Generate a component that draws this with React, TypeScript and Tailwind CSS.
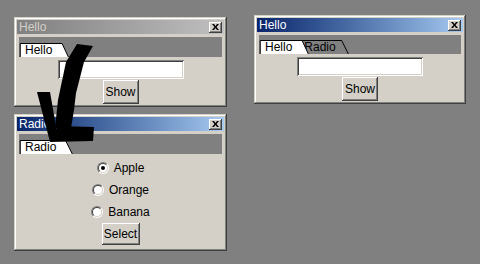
import React from 'react';

const raised =
  'shadow-[inset_-1px_-1px_0_#404040,inset_1px_1px_0_#d4d0c8,inset_-2px_-2px_0_#808080,inset_2px_2px_0_#ffffff]';
const button =
  'shadow-[inset_-1px_-1px_0_#404040,inset_1px_1px_0_#ffffff,inset_-2px_-2px_0_#808080,inset_2px_2px_0_#d4d0c8]';
const sunken =
  'shadow-[inset_1px_1px_0_#808080,inset_-1px_-1px_0_#ffffff,inset_2px_2px_0_#404040,inset_-2px_-2px_0_#d4d0c8]';

const font = "font-['Liberation_Sans',Arial,sans-serif]";

const CloseButton = () => (
  <div className={`flex h-[11px] w-[13px] items-center justify-center bg-[#d4d0c8] ${button}`}>
    <svg width="7" height="6" viewBox="0 0 7 6">
      <path d="M0 0h2l1.5 2L5 0h2L4.5 3 7 6H5L3.5 4 2 6H0l2.5-3z" fill="#000" />
    </svg>
  </div>
);

const TabShape = ({ active }: { active?: boolean }) => (
  <svg className="absolute inset-0 h-full w-full overflow-visible" viewBox="0 0 100 14" preserveAspectRatio="none">
    <path
      d="M0.5 14 V0.5 H87 L100 14"
      fill={active ? '#ffffff' : '#808080'}
      stroke="#000"
      strokeWidth="1"
      vectorEffect="non-scaling-stroke"
    />
  </svg>
);

const Tab = ({ label, active, className = '' }: { label: string; active?: boolean; className?: string }) => (
  <div className={`relative h-[14px] ${className}`}>
    <TabShape active={active} />
    <span className="relative block pl-[5px] pr-[16px] text-[12px] leading-[14px] text-black">{label}</span>
  </div>
);

const Radio = ({ label, checked }: { label: string; checked?: boolean }) => (
  <div className="flex h-[22px] items-center gap-[5px]">
    <div className="h-[12px] w-[12px] rounded-full border border-t-[#808080] border-l-[#808080] border-r-white border-b-white">
      <div className="flex h-full w-full items-center justify-center rounded-full border border-t-[#404040] border-l-[#404040] border-r-[#d4d0c8] border-b-[#d4d0c8] bg-white">
        {checked && <div className="h-[4px] w-[4px] rounded-full bg-black" />}
      </div>
    </div>
    <span className="text-[12px] text-black">{label}</span>
  </div>
);

const Window = ({
  title,
  active,
  className,
  tabs,
  children,
}: {
  title: string;
  active?: boolean;
  className: string;
  tabs: React.ReactNode;
  children: React.ReactNode;
}) => (
  <div className={`absolute flex flex-col bg-[#d4d0c8] p-[3px] ${raised} ${className}`}>
    <div
      className={`flex h-[14px] items-center justify-between pl-[2px] pr-[2px] ${
        active
          ? 'bg-linear-to-r from-[#0a246a] to-[#a6caf0] text-white'
          : 'bg-linear-to-r from-[#808080] to-[#c0c0c0] text-[#d4d0c8]'
      }`}
    >
      <span className="text-[12px] leading-[14px]">{title}</span>
      <CloseButton />
    </div>
    <div className="mx-[2px] mt-[3px] flex h-[20px] items-end bg-[#808080] pl-[1px]">{tabs}</div>
    <div className="flex flex-1 flex-col items-center">{children}</div>
  </div>
);

const HelloBody = () => (
  <>
    <div className={`mt-[3px] h-[19px] w-[126px] bg-white ${sunken}`} />
    <div className={`mt-[1px] flex h-[24px] w-[36px] items-center justify-center bg-[#d4d0c8] text-[12px] text-black ${button}`}>
      Show
    </div>
  </>
);

export default function App() {
  return (
    <div className={`relative h-[264px] w-[480px] overflow-hidden bg-[#808080] ${font}`}>
      <Window title="Hello" className="left-[14px] top-[17px] h-[90px] w-[213px]" tabs={<Tab label="Hello" active />}>
        <HelloBody />
      </Window>

      <Window
        title="Hello"
        active
        className="left-[254px] top-[15px] h-[89px] w-[212px]"
        tabs={
          <div className="flex">
            <Tab label="Hello" active className="z-10" />
            <Tab label="Radio" className="-ml-[11px] [&>span]:pl-[7px] [&>span]:pr-[13px]" />
          </div>
        }
      >
        <HelloBody />
      </Window>

      <Window
        title="Radio"
        active
        className="left-[14px] top-[114px] h-[137px] w-[213px]"
        tabs={<Tab label="Radio" active />}
      >
        <div className="mt-[3px] flex flex-col items-center">
          <Radio label="Apple" checked />
          <Radio label="Orange" />
          <Radio label="Banana" />
        </div>
        <div className={`flex h-[22px] w-[38px] items-center justify-center bg-[#d4d0c8] text-[12px] text-black ${button}`}>
          Select
        </div>
      </Window>

      {/* hand-drawn arrow over the windows */}
      <svg className="pointer-events-none absolute inset-0" width="480" height="264" viewBox="0 0 480 264">
        <polygon points="77,44 93,46 84,62 76,93 74,110 71,128 55,128 58,100 66,62" fill="#000" />
        <polygon points="37,92 50,92 58,138 50,142" fill="#000" />
        <polygon points="58,126 94,127 93,141 50,142" fill="#000" />
      </svg>
    </div>
  );
}
